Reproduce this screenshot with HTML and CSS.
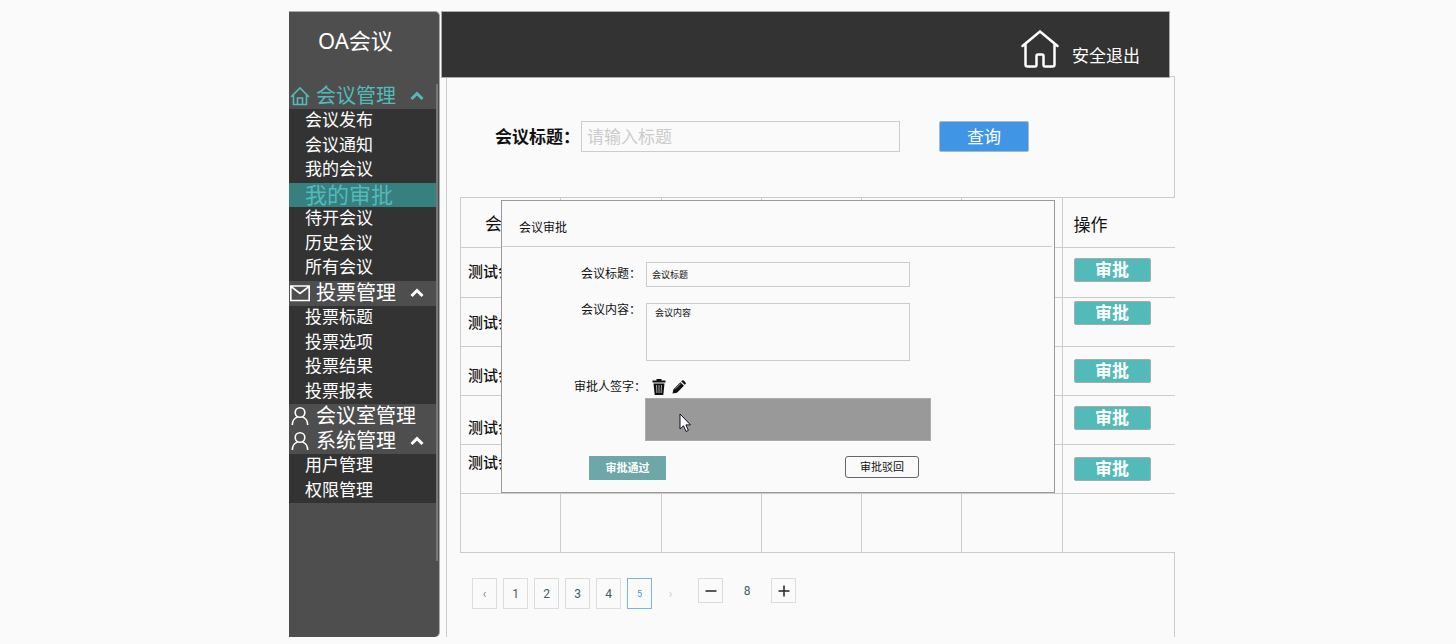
FILE: index.html
```
<!DOCTYPE html>
<html lang="zh-CN">
<head>
    <meta charset="UTF-8">
    <meta name="viewport" content="width=device-width, initial-scale=1.0">
    <title>OA会议 - 我的审批</title>
    <link rel="stylesheet" href="styles.css">
</head>
<body>
    <div class="app">
        <aside class="sidebar">
            <h1 class="logo">OA会议</h1>
            <nav class="menu">
                <button type="button" class="menu-group open">
                    <svg class="menu-icon" viewBox="0 0 20 20"><path d="M1 11 10 2l9 9M3.500 9v9.500h13V9M7.500 18.500V12h5v6.500"/></svg>
                    <span>会议管理</span>
                    <svg class="arrow" viewBox="0 0 14 10"><path d="M1.500 8 7 2.500 12.500 8"/></svg>
                </button>
                <ul class="submenu">
                    <li><a href="#">会议发布</a></li>
                    <li><a href="#">会议通知</a></li>
                    <li><a href="#">我的会议</a></li>
                    <li class="active"><a href="#">我的审批</a></li>
                    <li><a href="#">待开会议</a></li>
                    <li><a href="#">历史会议</a></li>
                    <li><a href="#">所有会议</a></li>
                </ul>
                <button type="button" class="menu-group">
                    <svg class="menu-icon" viewBox="0 0 20 20"><path d="M.8 3h18.400v14.500H.8zM1 3.500l9 7 9-7"/></svg>
                    <span>投票管理</span>
                    <svg class="arrow" viewBox="0 0 14 10"><path d="M1.500 8 7 2.500 12.500 8"/></svg>
                </button>
                <ul class="submenu">
                    <li><a href="#">投票标题</a></li>
                    <li><a href="#">投票选项</a></li>
                    <li><a href="#">投票结果</a></li>
                    <li><a href="#">投票报表</a></li>
                </ul>
                <a href="#" class="menu-group">
                    <svg class="menu-icon" viewBox="0 0 20 20"><circle cx="10" cy="6.500" r="4.800"/><path d="M2.300 19c0-4 2.500-7.200 5.200-8M17.700 19c0-4-2.500-7.200-5.200-8"/></svg>
                    <span>会议室管理</span>
                </a>
                <button type="button" class="menu-group">
                    <svg class="menu-icon" viewBox="0 0 20 20"><circle cx="10" cy="6.500" r="4.800"/><path d="M2.300 19c0-4 2.500-7.200 5.200-8M17.700 19c0-4-2.500-7.200-5.200-8"/></svg>
                    <span>系统管理</span>
                    <svg class="arrow" viewBox="0 0 14 10"><path d="M1.500 8 7 2.500 12.500 8"/></svg>
                </button>
                <ul class="submenu">
                    <li><a href="#">用户管理</a></li>
                    <li><a href="#">权限管理</a></li>
                </ul>
            </nav>
        </aside>

        <div class="main">
            <header class="topbar">
                <a href="#" class="home" aria-label="首页">
                    <svg viewBox="0 0 38 38"><path d="M1.500 16 19 1.500 36.500 16M4.500 14v20.500q0 2 2 2h7.500q1.500 0 1.500-1.500v-9q0-1.500 1.500-1.500h4q1.500 0 1.500 1.500v9q0 1.500 1.500 1.500h7.500q2 0 2-2V14"/></svg>
                </a>
                <a href="#" class="logout">安全退出</a>
            </header>

            <main class="content">
                <form class="search">
                    <label for="keyword">会议标题：</label>
                    <input type="text" id="keyword" placeholder="请输入标题">
                    <button type="button">查询</button>
                </form>

                <table class="list">
                    <thead>
                        <tr><th>会议标题</th><th></th><th></th><th></th><th></th><th></th><th class="op">操作</th></tr>
                    </thead>
                    <tbody>
                        <tr class="first"><td class="high">测试会议</td><td></td><td></td><td></td><td></td><td></td><td class="op high"><button type="button">审批</button></td></tr>
                        <tr><td>测试会议</td><td></td><td></td><td></td><td></td><td></td><td class="op top"><button type="button">审批</button></td></tr>
                        <tr><td class="low">测试会议</td><td></td><td></td><td></td><td></td><td></td><td class="op"><button type="button">审批</button></td></tr>
                        <tr><td class="bottom">测试会议</td><td></td><td></td><td></td><td></td><td></td><td class="op high"><button type="button">审批</button></td></tr>
                        <tr><td class="top">测试会议</td><td></td><td></td><td></td><td></td><td></td><td class="op"><button type="button">审批</button></td></tr>
                        <tr class="blank"><td></td><td></td><td></td><td></td><td></td><td></td><td></td></tr>
                    </tbody>
                </table>

                <div class="pager">
                    <button type="button" class="page prev" aria-label="上一页">‹</button>
                    <button type="button" class="page">1</button>
                    <button type="button" class="page">2</button>
                    <button type="button" class="page">3</button>
                    <button type="button" class="page">4</button>
                    <button type="button" class="page current">5</button>
                    <button type="button" class="page next" aria-label="下一页" disabled>›</button>
                    <div class="stepper">
                        <button type="button" aria-label="减少"><svg viewBox="0 0 12 12"><path d="M.5 6h11"/></svg></button>
                        <span>8</span>
                        <button type="button" aria-label="增加"><svg viewBox="0 0 12 12"><path d="M.5 6h11M6 .5v11"/></svg></button>
                    </div>
                </div>

                <!-- 审批弹窗 -->
                <div class="dialog" role="dialog" aria-labelledby="dialog-title">
                    <h2 id="dialog-title">会议审批</h2>
                    <form class="dialog-form">
                        <label for="title">会议标题：</label>
                        <input type="text" id="title" value="会议标题">
                        <label for="detail">会议内容：</label>
                        <textarea id="detail">会议内容</textarea>
                        <span class="sign-label">审批人签字：</span>
                        <div class="tools">
                            <button type="button" aria-label="清除">
                                <svg viewBox="0 0 14 16"><path d="M4.500 0h5v1.500H13.500V3.500H.5V1.500h4z"/><path d="M1.500 4.500h11L11.300 16H2.700z"/><path class="slot" d="m4.500 6 .4 8M7 6v8m2.500-8-.4 8"/></svg>
                            </button>
                            <button type="button" aria-label="签字">
                                <svg viewBox="0 0 16 16"><path d="m1.700 10.500 8-8 4 4-8 8L.5 15.500zM10.600 1.600l.9-.9q.9-.9 1.900 0l2.100 2.100q.8.900 0 1.800l-.9.900z"/><path class="slot" d="M3.500 10.500 10 4"/></svg>
                            </button>
                        </div>
                        <div class="sign-pad">
                            <svg class="cursor" viewBox="0 0 12 20"><path d="M1 1v15l3.500-3.200L7 18.500l2.400-1.100-2.500-5.500h4.600z"/></svg>
                        </div>
                    </form>
                    <div class="dialog-foot">
                        <button type="button" class="pass">审批通过</button>
                        <button type="button" class="reject">审批驳回</button>
                    </div>
                </div>
            </main>
        </div>
    </div>
</body>
</html>
```

FILE: styles.css
```
* { box-sizing: border-box; margin: 0; padding: 0; }
body { background: #fafafa; color: #111; padding: 11px 281px 7px 289px; font-family: "Noto Sans", "Noto Sans CJK SC", sans-serif; font-size: 17px; line-height: 24px; }
a { color: inherit; text-decoration: none; }
ul { list-style: none; }
button, input, textarea { font: inherit; color: inherit; }
button { cursor: pointer; background: none; border: none; }
svg { display: block; fill: none; stroke: currentColor; }

.app { display: flex; gap: 1px; min-height: 626px; }

/* 左侧菜单 */
.sidebar { flex: none; width: 151px; background: #4e4e4e; color: #fff; border-radius: 0 5px 5px 0; border-right: 1px solid #aaa; border-top: 1px solid #aaa; }
.logo { height: 72px; padding: 12px 0 0 29px; font-size: 22px; font-weight: 400; line-height: 32px; }
.menu { width: 149px; min-height: 477px; border-right: 2px solid #777; line-height: 22px; }
.menu-group { display: flex; align-items: center; width: 100%; height: 25px; padding: 0 0 2px 1px; font-size: 20px; }
.menu-group.open { color: #53baba; }
.menu-icon { width: 20px; height: 20px; margin-right: 6px; stroke-width: 1.6; }
.arrow { width: 14px; height: 10px; margin-left: 14px; stroke-width: 3; }
.submenu { background: #333; }
.submenu li { height: 24px; padding-left: 16px; }
.submenu li:nth-child(odd) { height: 25px; }
.submenu a { display: block; }
.submenu .active { background: #378080; color: #53baba; font-size: 22px; }

/* 右侧 */
.main { flex: 1; display: flex; flex-direction: column; min-width: 0; }
.topbar { position: relative; z-index: 1; display: flex; justify-content: flex-end; align-items: flex-end; gap: 13px; height: 67px; margin-right: 5px; padding: 0 29px 9px 0; background: #333; color: #fff; border: 1px solid #aaa; }
.home svg { width: 38px; height: 38px; stroke-width: 2.5; stroke-linecap: round; }
.content { position: relative; flex: 1; margin: -2px 0 0 5px; border: 1px solid #ccc; border-bottom: none; }

.search { display: flex; align-items: center; padding: 44px 145px 45px 48px; }
.search label { width: 86px; font-weight: 700; white-space: nowrap; }
.search input { flex: 1; min-width: 0; height: 31px; padding: 0 5px; background: none; border: 1px solid #ccc; }
.search input::placeholder { color: #ccc; }
.search button { width: 90px; height: 31px; margin-left: 39px; background: #4095e5; color: #fff; border: 1px solid #a5b9cc; border-radius: 2px; }

.list { width: calc(100% - 12px); margin-left: 13px; table-layout: fixed; border-collapse: collapse; position: relative; background: #fafafa; }
.list th, .list td { height: 49px; padding: 5px 0 5px 7px; border: 1px solid #ccc; border-right: none; text-align: left; white-space: nowrap; overflow: hidden; }
.list th { height: 50px; padding: 8px 0 5px 24px; font-weight: 400; }
.list td { font-size: 15px; font-weight: 500; }
.list .first td { height: 50px; }
.list .op { width: 113px; padding: 3px 0 3px 11px; }
.list th.op { padding-top: 8px; }
.list .blank td { height: 59px; }
.list .high { padding-bottom: 8px; }
.list .low { padding-top: 12px; }
.list .top { vertical-align: top; }
.list .bottom { vertical-align: bottom; }
.list button { display: block; width: 77px; height: 24px; background: #53baba; color: #fff; border: 1px solid #aaa; border-radius: 2px; font-size: 17px; font-weight: 700; line-height: 22px; }

/* 分页 */
.pager { display: flex; gap: 6px; padding: 25px 0 0 25px; font-family: Roboto, sans-serif; font-size: 12px; color: #455a64; }
.page { width: 25px; height: 31px; border: 1px solid #ddd; }
.page.prev { font-weight: 300; }
.page.current { border-color: #74b5f0; color: #4095e5; font-size: 9px; }
.page.next { border-color: transparent; color: #bbb; font-weight: 300; }
.stepper { display: flex; align-items: center; height: 25px; margin-left: 9px; }
.stepper button { display: grid; place-items: center; width: 25px; height: 25px; border: 1px solid #ddd; color: #222; }
.stepper svg { width: 12px; height: 12px; stroke-width: 1.5; }
.stepper span { width: 48px; text-align: center; }

/* 弹窗 */
.dialog { position: absolute; top: 123px; left: 54px; right: 119px; background: #fafafa; border: 1px solid #999; font-size: 12px; }
.dialog h2 { height: 46px; margin-right: 2px; padding: 15px 0 0 17px; border-bottom: 1px solid #ccc; font-size: 12px; font-weight: 400; }
.dialog-form { display: grid; grid-template-columns: 64px 264px; column-gap: 8px; padding: 15px 0 0 72px; }
.dialog-form label, .sign-label { justify-self: end; width: 57px; white-space: nowrap; }
.dialog-form .sign-label { width: 64px; }
.dialog-form input, .dialog-form textarea { border: 1px solid #ccc; background: none; font-size: 9px; resize: none; }
.dialog-form input { height: 25px; margin-bottom: 16px; padding: 0 5px; }
.dialog-form textarea { height: 58px; margin-bottom: 14px; padding: 2px 8px; line-height: 14px; }
.dialog-form label[for="detail"] { line-height: 14px; }
.tools { display: flex; align-items: center; gap: 6px; height: 23px; padding-left: 6px; }
.tools svg { width: 14px; height: 16px; fill: #111; stroke: none; }
.tools svg .slot { fill: none; stroke: #aaa; }
.sign-pad { grid-column: 2; width: 286px; height: 43px; margin: -1px 0 0 -1px; padding: 14px 0 0 33px; background: #999; border: 1px solid #aaa; }
.cursor { width: 12px; height: 20px; fill: #fff; stroke: #112; }
.dialog-foot { display: flex; justify-content: space-between; padding: 15px 135px 12px 87px; font-size: 11px; }
.pass { width: 77px; height: 24px; background: #6da7a7; color: #fff; font-size: 11px; font-weight: 700; }
.reject { width: 74px; height: 22px; border: 1px solid #666; border-radius: 3px; line-height: 20px; }
```
